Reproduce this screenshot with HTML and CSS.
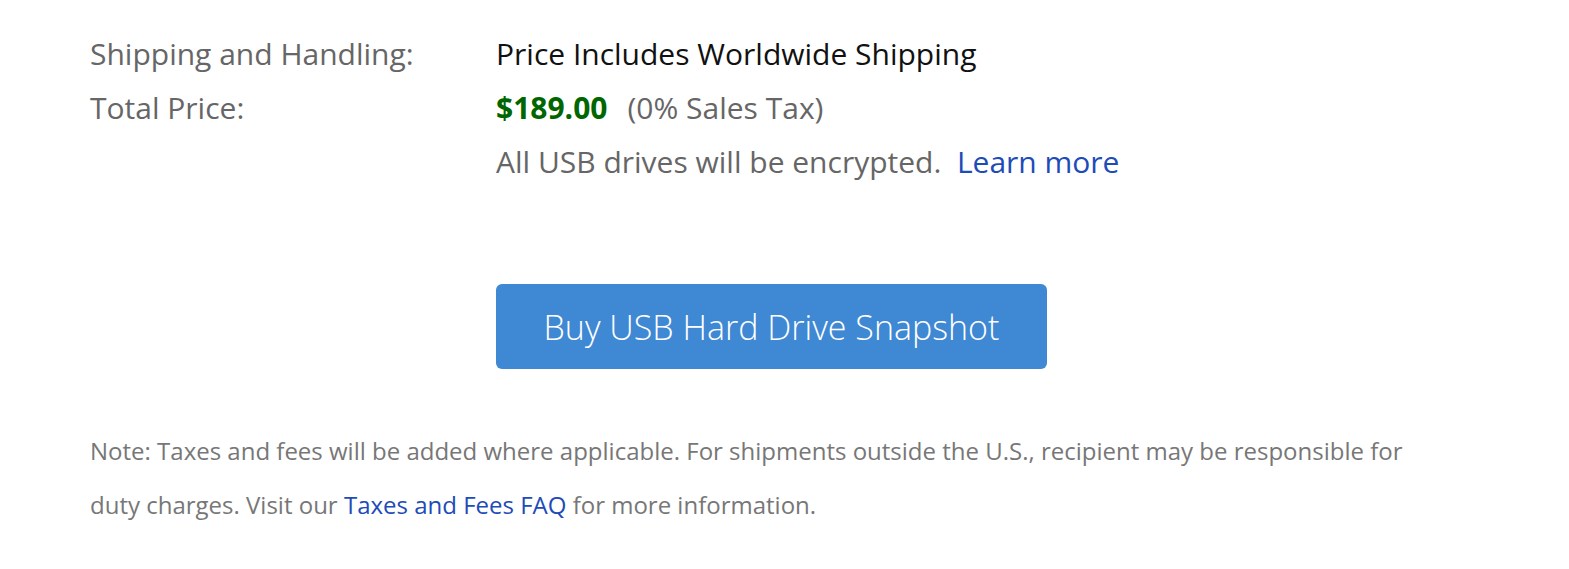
FILE: index.html
```html
<!DOCTYPE html>
<html>
<head>
<meta charset="utf-8">
<link rel="stylesheet" href="styles.css">
</head>
<body>
<div class="page">
  <div class="details">
    <div class="row">
      <div class="label">Shipping and Handling:</div>
      <div class="value dark">Price Includes Worldwide Shipping</div>
    </div>
    <div class="row">
      <div class="label">Total Price:</div>
      <div class="value"><span class="price">$189.00</span><span class="tax">(0% Sales Tax)</span></div>
    </div>
    <div class="row">
      <div class="label"></div>
      <div class="value">All USB drives will be encrypted.&nbsp; <a class="link" href="#">Learn more</a></div>
    </div>
  </div>
  <div class="actions">
    <button class="buy">Buy USB Hard Drive Snapshot</button>
  </div>
  <p class="note">Note: Taxes and fees will be added where applicable. For shipments outside the U.S., recipient may be responsible for duty charges. Visit our <a class="link" href="#">Taxes and Fees FAQ</a> for more information.</p>
</div>
</body>
</html>
```

FILE: styles.css
```css
html, body {
  margin: 0;
  padding: 0;
  background: #fff;
}
body {
  font-family: "Open Sans", sans-serif;
}
.page {
  padding: 26px 0 0 90px;
  width: 1330px;
}
.details {
  display: flex;
  flex-direction: column;
}
.row {
  display: flex;
  height: 54px;
  align-items: center;
  font-size: 30px;
  color: #666;
}
.label {
  width: 406px;
  flex: none;
}
.value.dark {
  color: #111;
}
.price {
  color: #006600;
  font-weight: 700;
  margin-right: 20px;
}
.link {
  color: #1d4bb8;
  text-decoration: none;
}
.actions {
  padding: 96px 0 0 406px;
}
.buy {
  display: block;
  width: 551px;
  height: 85px;
  border: none;
  border-radius: 6px;
  background: #3f88d3;
  color: #fff;
  font-family: "Open Sans", sans-serif;
  font-weight: 300;
  font-size: 34px;
  padding: 0;
}
.note {
  margin: 55px 0 0 0;
  width: 1325px;
  font-size: 24px;
  line-height: 54px;
  color: #777;
}
```
